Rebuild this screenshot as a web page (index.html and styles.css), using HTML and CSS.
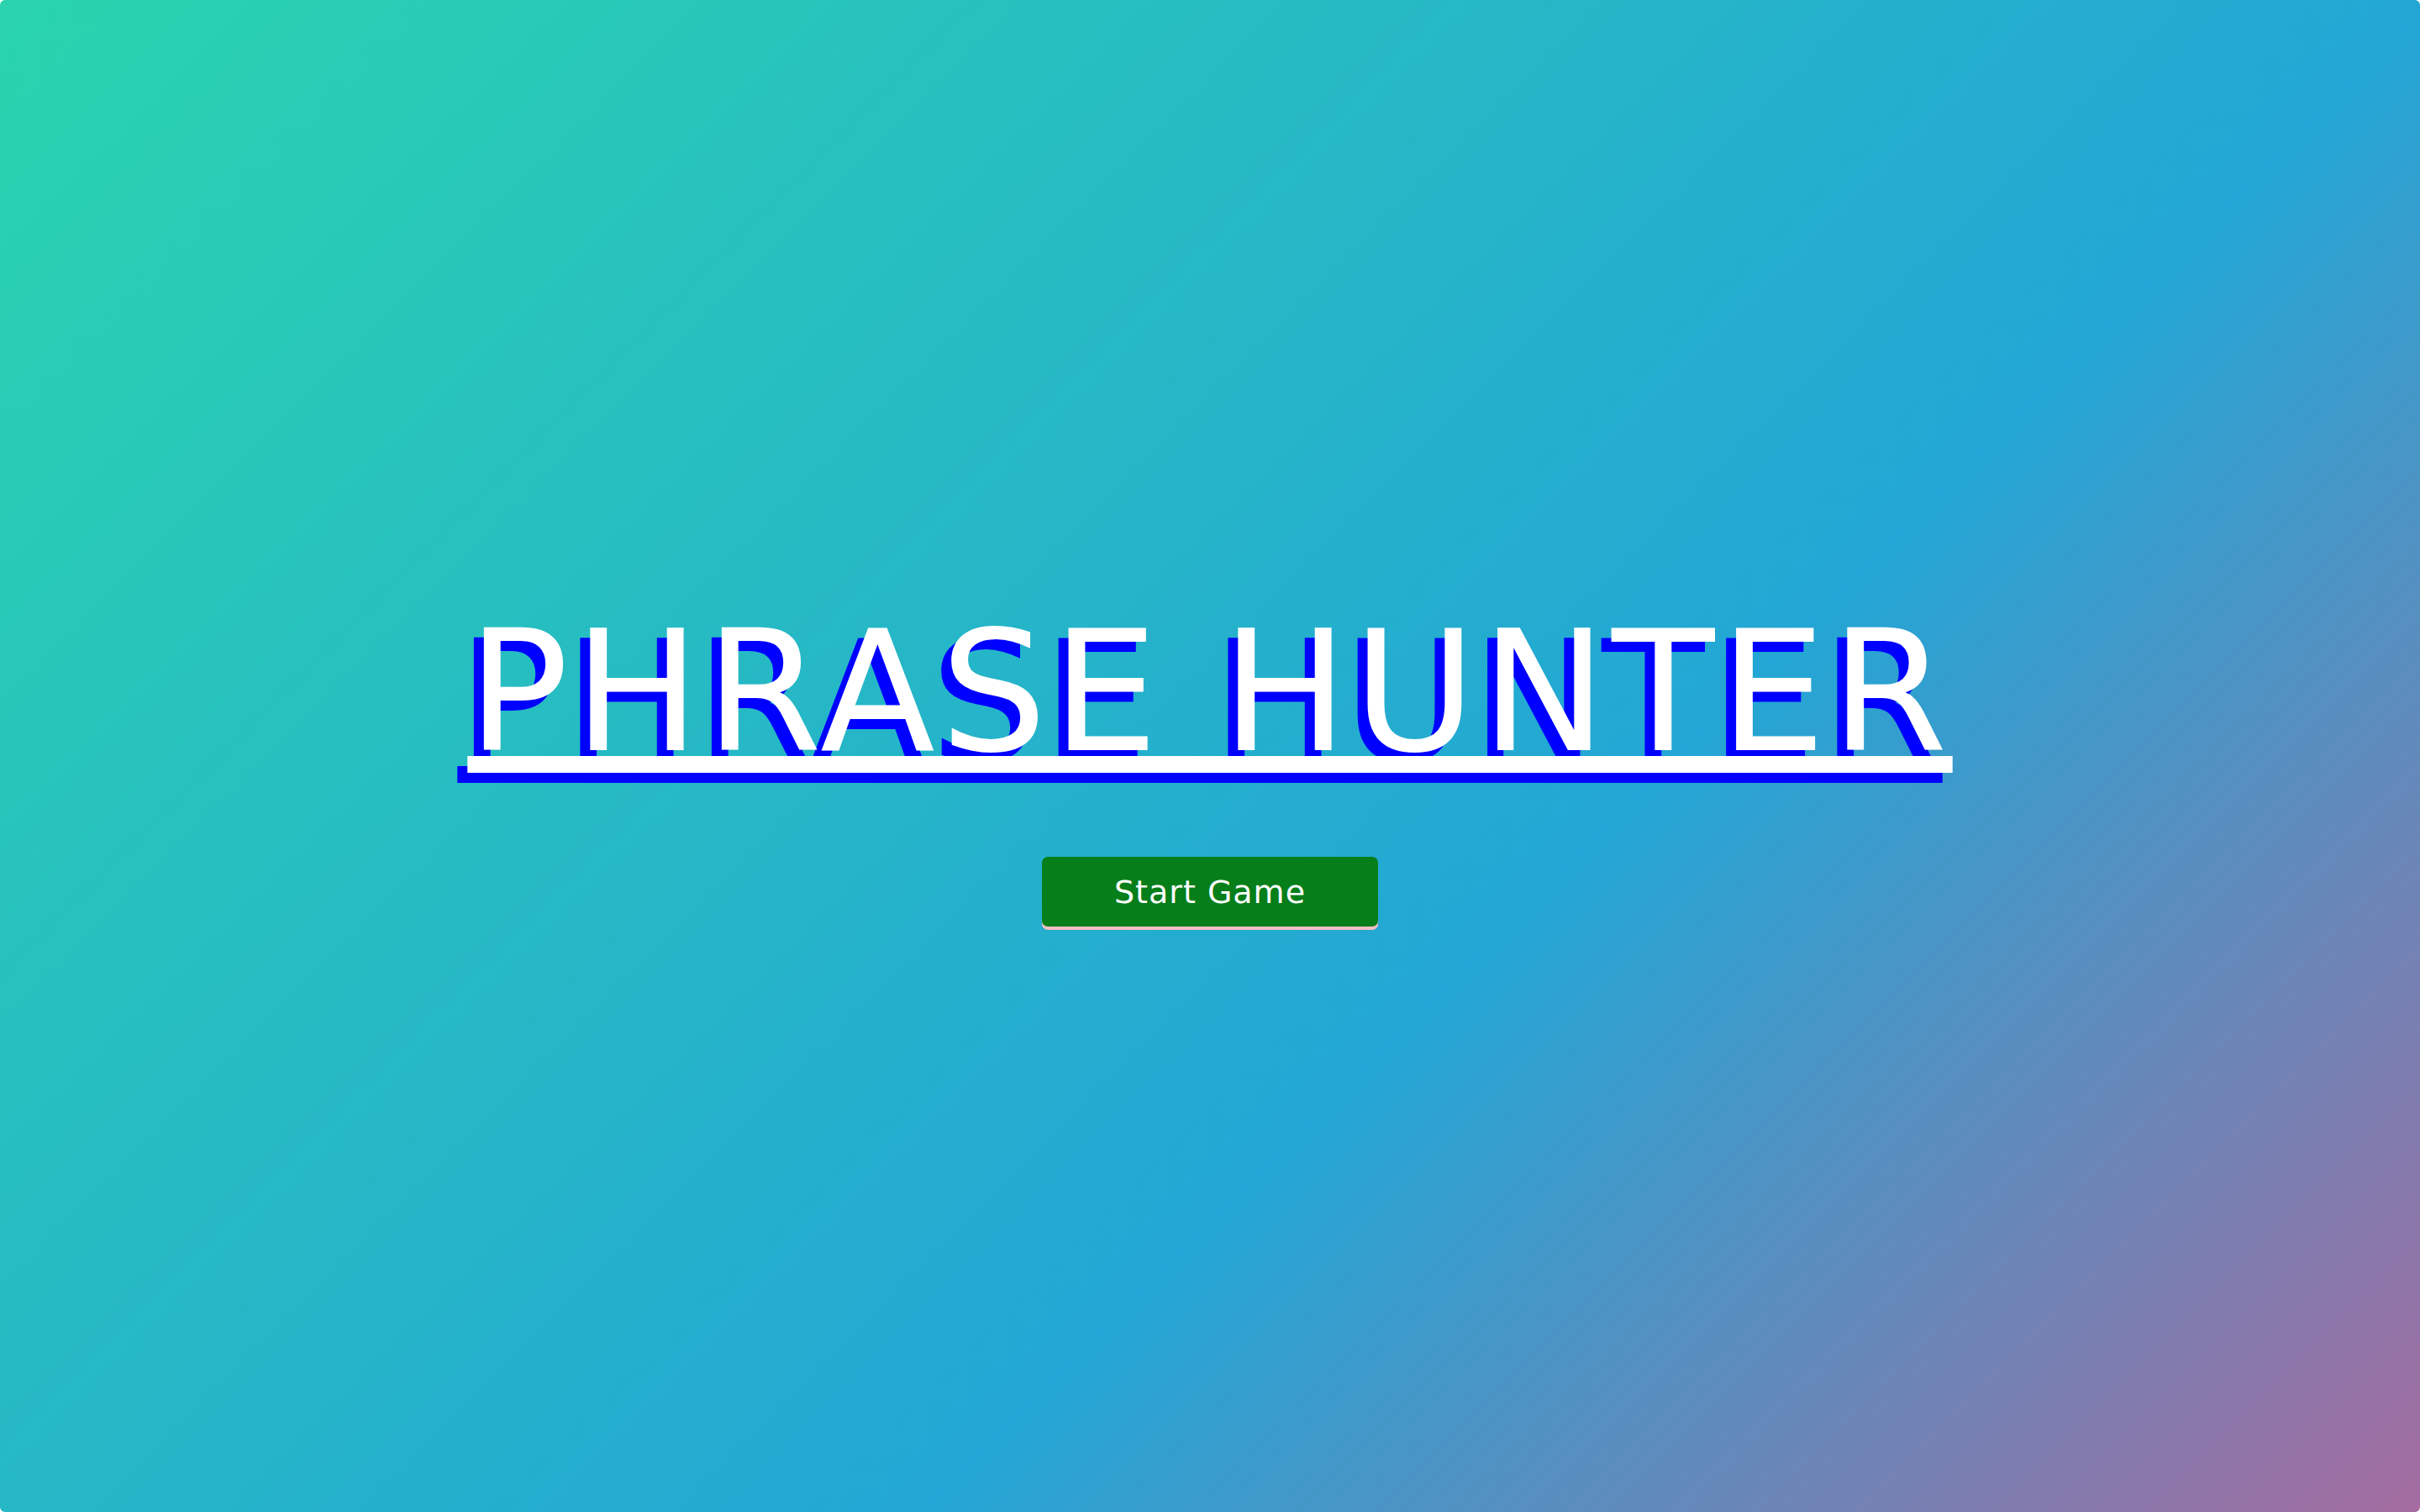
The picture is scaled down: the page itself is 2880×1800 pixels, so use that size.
FILE: index.html
```html
<!DOCTYPE html>
<html lang="en">
<head>
<meta charset="utf-8">
<title>Phrase Hunter</title>
<link rel="stylesheet" href="styles.css">
</head>
<body>
<div class="overlay">
  <h2 class="title">PHRASE HUNTER</h2>
  <button class="btn-reset">Start Game</button>
</div>
</body>
</html>
```
FILE: styles.css
```css
html, body {
  margin: 0;
  padding: 0;
  background: #fff;
}
.overlay {
  box-sizing: border-box;
  width: 2880px;
  height: 1800px;
  border-radius: 6px;
  background: linear-gradient(135deg, #2ad4ae 0%, #23a6d5 62%, #a56ca0 100%);
  display: flex;
  flex-direction: column;
  align-items: center;
  justify-content: center;
  padding-top: 27px;
  font-family: "DejaVu Sans", sans-serif;
}
.title {
  margin: 0;
  font-size: 200px;
  line-height: 1;
  font-weight: normal;
  letter-spacing: 6px;
  color: #fff;
  text-decoration: underline;
  text-decoration-thickness: 20px;
  text-underline-offset: 7px;
  text-shadow: -12px 12px 0 blue;
}
.btn-reset {
  margin-top: 96px;
  width: 400px;
  height: 83px;
  border: none;
  border-radius: 7px;
  background: #067e1a;
  color: #fff;
  font-family: "DejaVu Sans", sans-serif;
  font-size: 38px;
  letter-spacing: 1px;
  box-shadow: 0 4px 0 #f7bfc3;
  padding: 0;
}
```
